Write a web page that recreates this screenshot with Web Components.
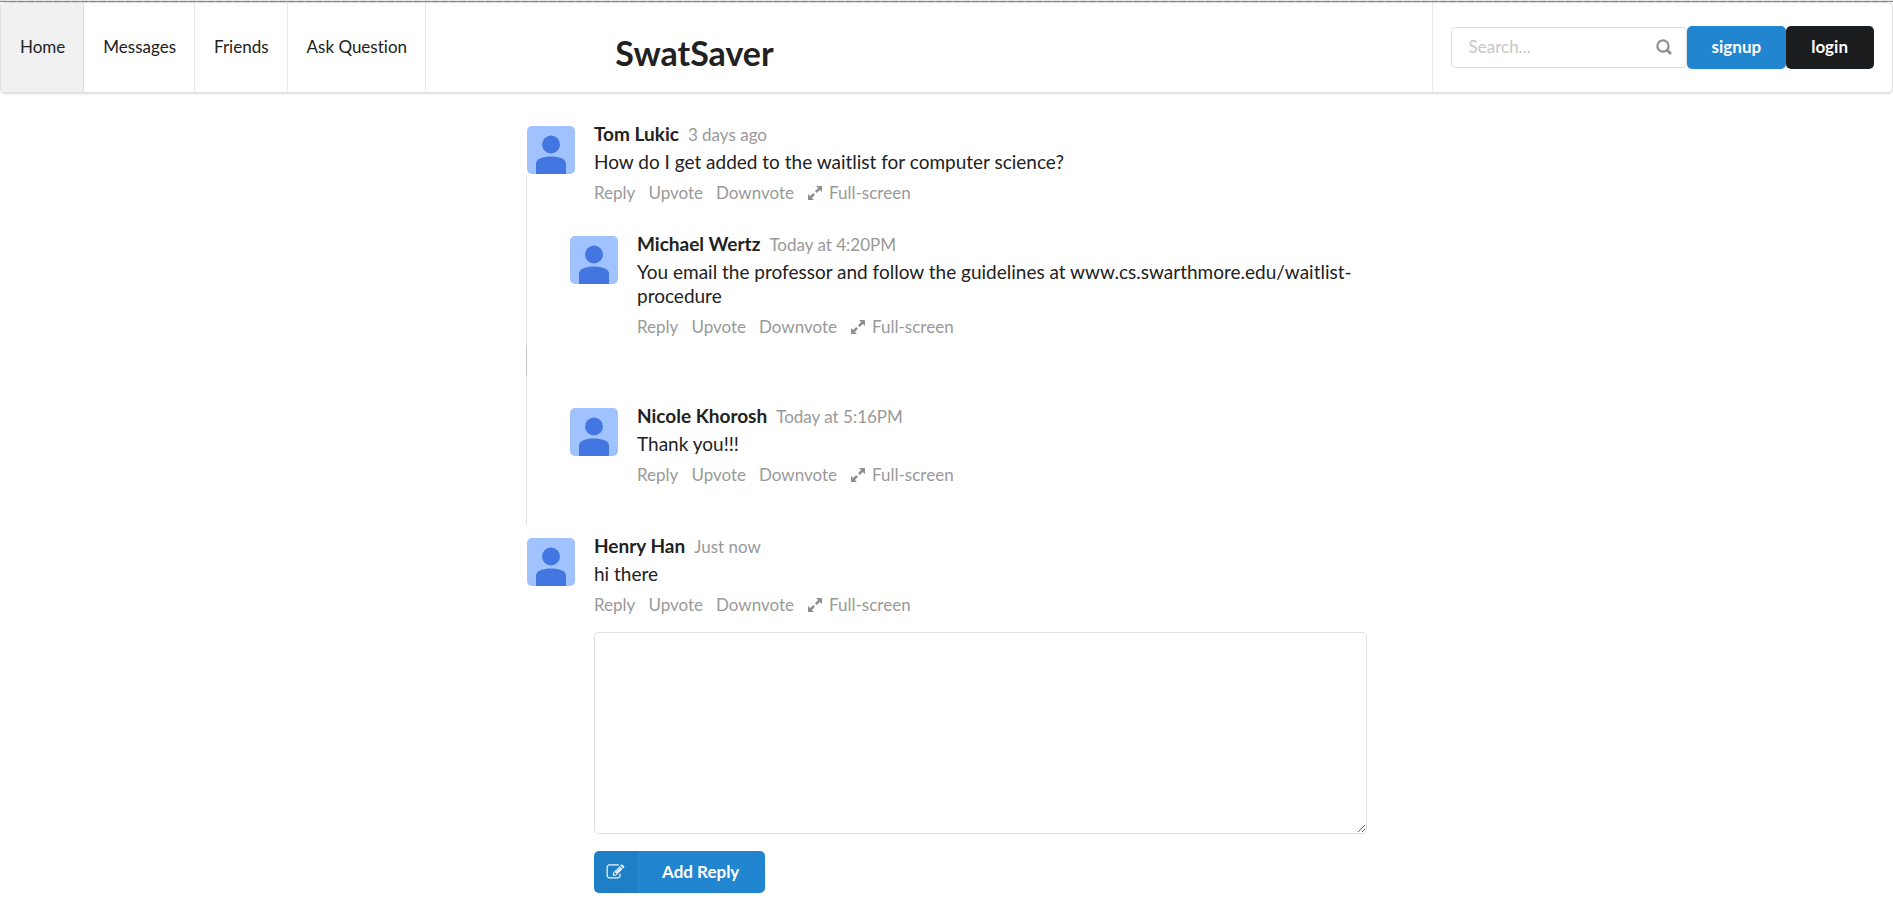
<!DOCTYPE html>
<html lang="en">
<head>
<meta charset="utf-8">
<title>SwatSaver</title>
<style>
  body { margin: 0; background: #fff; color: #212121; font: 17px/20px Lato, "Liberation Sans", sans-serif; font-variant-ligatures: none; }
</style>
</head>
<body>
<swat-menu></swat-menu>
<swat-thread>
  <swat-comment author="Tom Lukic" date="3 days ago">How do I get added to the waitlist for computer science?</swat-comment>
  <swat-replies>
    <swat-comment author="Michael Wertz" date="Today at 4:20PM">You email the professor and follow the guidelines at www.cs.swarthmore.edu/waitlist-procedure</swat-comment>
  </swat-replies>
  <swat-replies>
    <swat-comment author="Nicole Khorosh" date="Today at 5:16PM">Thank you!!!</swat-comment>
  </swat-replies>
  <swat-comment author="Henry Han" date="Just now">hi there<swat-reply-form slot="form"></swat-reply-form></swat-comment>
</swat-thread>

<script>
const define = (name, html, setup) => customElements.define(name, class extends HTMLElement {
  constructor() {
    super();
    this.attachShadow({ mode: 'open' }).innerHTML = html;
  }
  connectedCallback() { if (setup) setup(this, this.shadowRoot); }
});

define('swat-button', `
  <style>
    :host { display: block; }
    button { display: flex; align-items: center; box-sizing: border-box; height: 43px; padding: 0; margin: 0;
      border: 0; border-radius: 5px; background: #2185d0; color: #fff; font: 700 17px/20px Lato, "Liberation Sans", sans-serif;
      overflow: hidden; cursor: pointer; }
    :host([tone=black]) button { background: #1b1c1d; }
    :host([labeled]) button { height: 42px; }
    .text { padding: 0 25px; }
    :host([tone=black]) .text, :host([labeled]) .text { padding-right: 26px; }
    ::slotted(svg) { box-sizing: border-box; width: 43px; height: 42px; padding: 12px; background: rgba(0,0,0,.05); opacity: .9; }
  </style>
  <button type="button"><slot name="icon"></slot><span class="text"><slot></slot></span></button>`);

define('swat-search', `
  <style>
    :host { display: block; }
    label { display: flex; align-items: center; box-sizing: border-box; width: 236px; height: 41px; padding: 0 14px 0 17px;
      border: 1px solid rgba(34,36,38,.15); border-radius: 5px; background: #fff; }
    input { flex: 1; min-width: 0; border: 0; outline: 0; padding: 0; background: none; color: inherit;
      font: 17px/20px Lato, "Liberation Sans", sans-serif; }
    input::placeholder { color: #c7c7c7; opacity: 1; }
    svg { width: 16px; height: 16px; }
  </style>
  <label><input type="text" placeholder="Search..." aria-label="Search">
    <svg viewBox="0 0 16 16" fill="none" stroke="#8f8f8f" stroke-width="2.2" aria-hidden="true"><circle cx="7" cy="7" r="5.6"/><path d="M11 11l4 4" stroke-width="2.8"/></svg>
  </label>`);

define('swat-menu-item', `
  <style>
    :host { display: flex; border-right: 1px solid rgba(34,36,38,.1); }
    :host([active]) { background: #f1f1f1; }
    a { display: flex; align-items: center; padding: 0 18px 1px 19px; color: #212121; text-decoration: none; }
  </style>
  <a href="#"><slot></slot></a>`);

define('swat-menu', `
  <style>
    :host { display: block; padding-top: 1px; background: linear-gradient(#e4e4e4, #e4e4e4) top / 100% 1px no-repeat; }
    .rule { height: 1px; background: repeating-linear-gradient(90deg, #838383 0 7px, #a5a5a5 7px 9px); }
    nav { display: flex; height: 89px; border: 1px solid rgba(34,36,38,.15); border-radius: 5px;
      box-shadow: 0 1px 2px rgba(34,36,38,.15); }
    h1 { margin: 11px auto 0 10vw; align-self: center; font-size: 34px; line-height: 40px; font-weight: 700; }
    .right { display: flex; align-items: center; padding: 0 18px 1px; border-left: 1px solid rgba(34,36,38,.1); }
  </style>
  <div class="rule"></div>
  <nav>
    <swat-menu-item active>Home</swat-menu-item>
    <swat-menu-item>Messages</swat-menu-item>
    <swat-menu-item>Friends</swat-menu-item>
    <swat-menu-item>Ask Question</swat-menu-item>
    <h1>SwatSaver</h1>
    <div class="right">
      <swat-search></swat-search>
      <swat-button>signup</swat-button>
      <swat-button tone="black">login</swat-button>
    </div>
  </nav>`);

define('swat-thread', `
  <style>
    :host { display: block; box-sizing: border-box; max-width: 841px; margin: 29px auto 0; padding: 0 0 11px 1px; }
  </style>
  <slot></slot>`);

define('swat-replies', `
  <style>
    :host { display: block; margin: -29px 0 0 -1px; padding: 58px 0 39px 43px; border-left: 1px solid rgba(34,36,38,.15); }
    :host(:nth-of-type(2)) { padding-top: 57px; }
    :host(:last-of-type) { margin-bottom: 10px; }
  </style>
  <slot></slot>`);

define('swat-avatar', `
  <style>
    :host { display: block; width: 48px; height: 48px; border-radius: 5px; overflow: hidden; }
    svg { display: block; }
  </style>
  <svg width="48" height="48" viewBox="0 0 48 48" role="img" aria-label="Avatar">
    <rect width="48" height="48" fill="#a0c2ff"/><circle cx="24" cy="18.500" r="9" fill="#4376e0"/>
    <path d="M9 48V37.500C9 33 16 30.500 24 30.500S39 33 39 37.500V48z" fill="#4376e0"/>
  </svg>`);

define('swat-comment', `
  <style>
    :host { display: grid; grid-template-columns: 48px 1fr; column-gap: 19px; }
    swat-avatar { margin-top: 4px; }
    .head, .text { font-size: 19px; line-height: 24px; }
    .head { display: flex; align-items: baseline; gap: 9px; }
    .date { font-size: 17px; line-height: 20px; color: #999; }
    .text { margin: 4px 0 9px; overflow-wrap: break-word; }
    .actions { display: flex; gap: 13px; position: relative; z-index: 1; }
    a { display: flex; align-items: center; color: #999; text-decoration: none; }
    svg { width: 16px; height: 16px; margin: 0 6px 0 0; }
  </style>
  <swat-avatar></swat-avatar>
  <div>
    <div class="head"><b class="author"></b><span class="date"></span></div>
    <div class="text"><slot></slot></div>
    <div class="actions"><a href="#">Reply</a><a href="#">Upvote</a><a href="#">Downvote</a>
      <a href="#"><svg viewBox="0 0 16 16" aria-hidden="true"><path d="M9 1H15V7L12.900 4.900 9.800 8 8 6.200 11.100 3.100zM1 9V15H7L4.900 12.900 8 9.800 6.200 8 3.100 11.100z" fill="#8f8f8f"/></svg>Full-screen</a></div>
    <slot name="form"></slot>
  </div>`, (host, root) => {
    root.querySelector('.author').textContent = host.getAttribute('author');
    root.querySelector('.date').textContent = host.getAttribute('date');
  });

define('swat-reply-form', `
  <style>
    :host { display: block; margin-top: 17px; }
    form { display: grid; justify-items: start; gap: 17px; }
    textarea { display: block; box-sizing: border-box; width: 100%; height: 202px; margin: 0; padding: 13px 16px; resize: vertical;
      border: 1px solid rgba(34,36,38,.15); border-radius: 5px; outline: 0; background: #fff; font: 17px/22px Lato, "Liberation Sans", sans-serif; }
  </style>
  <form>
    <textarea aria-label="Reply"></textarea>
    <swat-button labeled><svg slot="icon" viewBox="0 0 1792 1792" aria-hidden="true"><path fill="#fff" d="M888 1184l116-116-152-152-116 116v56h96v96h56zm440-720q-16-16-33 1l-350 350q-17 17-1 33t33-1l350-350q17-17 1-33zm80 594v190q0 119-84.500 203.500t-203.500 84.500h-832q-119 0-203.500-84.500t-84.500-203.500v-832q0-119 84.500-203.500t203.500-84.500h832q63 0 117 25 15 7 18 23 3 17-9 29l-49 49q-14 14-32 8-23-6-45-6h-832q-66 0-113 47t-47 113v832q0 66 47 113t113 47h832q66 0 113-47t47-113v-126q0-13 9-22l64-64q15-15 35-7t20 29zm-96-738l288 288-672 672h-288v-288zm444 132l-92 92-288-288 92-92q28-28 68-28t68 28l152 152q28 28 28 68t-28 68z"/></svg>Add Reply</swat-button>
  </form>`);
</script>
</body>
</html>
